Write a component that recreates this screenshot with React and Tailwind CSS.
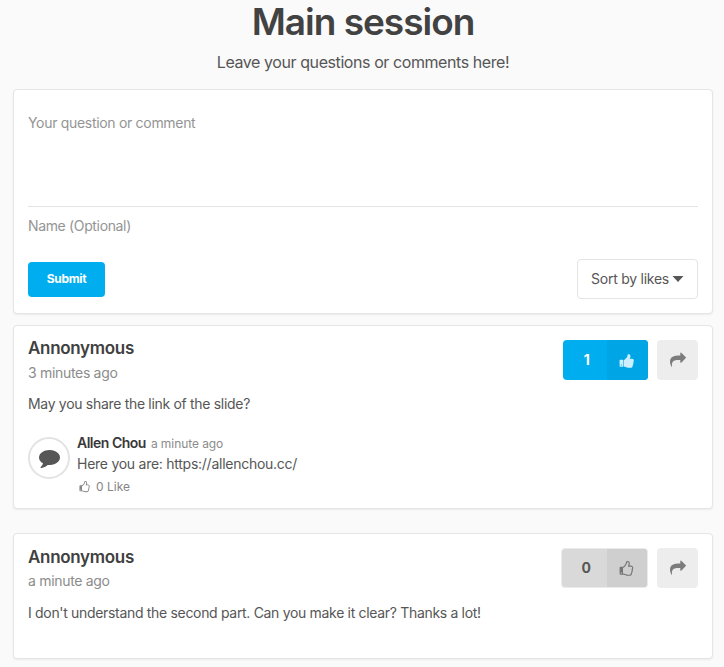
const THUMB_SOLID =
  'M320 1344q0-26-19-45t-45-19q-27 0-45.500 19t-18.500 45q0 27 18.500 45.500t45.500 18.500q26 0 45-18.500t19-45.500zm160-512v640q0 26-19 45t-45 19h-288q-26 0-45-19t-19-45v-640q0-26 19-45t45-19h288q26 0 45 19t19 45zm1184 0q0 86-55 149 15 44 15 76 3 76-43 137 17 56 0 117-15 57-54 94 9 112-49 181-64 76-197 78h-129q-66 0-144-15.500t-121.500-29-120.500-39.500q-123-43-158-44-26-1-45-19.500t-19-44.500v-641q0-25 18-43.500t43-20.500q24-2 76-59t101-121q68-87 101-120 18-18 31-48t17.500-48.500 13.500-60.500q7-39 12.500-61t19.500-52 34-50q19-19 45-19 46 0 82.500 10.500t60 26 40 40.500 24 45 12 50 5 45 .5 39q0 38-9.500 76t-19 60-27.500 56q-3 6-10 18t-11 22-8 24h277q78 0 135 57t57 135z';
const THUMB_OUTLINE =
  'M320 1344q0-26-19-45t-45-19q-27 0-45.500 19t-18.500 45q0 27 18.500 45.500t45.500 18.500q26 0 45-18.500t19-45.500zm1152-576q0-51-39-89.500t-89-38.500h-352q0-58 48-159.500t48-160.500q0-98-32-145t-128-47q-26 26-38 85t-30.500 125.500-59.500 109.500q-22 23-77 91-4 5-23 30t-31.500 41-34.500 42.500-40 44-38.500 35.500-40 27-35.500 9h-32v640h32q13 0 31.500 3t33 6.500 38 11 35 11.500 35.500 12.500 29 10.500q211 73 342 73h121q192 0 192-167 0-26-5-56 30-16 47.500-52.500t17.500-73.500-18-69q53-50 53-119 0-25-10-55.500t-25-47.500q32-1 53.500-47t21.500-81zm128-1q0 89-49 163 9 33 9 69 0 77-38 144 3 21 3 43 0 101-60 178 1 139-85 219.500t-227 80.500h-129q-96 0-189.500-22.500t-216.500-65.500q-116-40-138-40h-288q-53 0-90.500-37.500t-37.500-90.500v-640q0-53 37.500-90.500t90.500-37.500h274q36-24 137-155 58-75 107-128 24-25 35.500-85.500t30.500-126.500 62-108q39-37 90-37 84 0 151 32.500t102 101.500 35 186q0 93-48 192h176q104 0 180 76t76 179z';
const SHARE =
  'M1792 640q0 26-19 45l-512 512q-19 19-45 19t-45-19-19-45v-256h-224q-98 0-175.500 6t-154 21.500-133 42.500-105.500 69.500-80 101-48.500 138.500-17.500 181q0 55 5 123 0 6 2.500 23.500t2.500 26.500q0 15-8.500 25t-23.500 10q-16 0-28-17-7-9-13-22t-13.500-30-10.500-24q-127-285-127-451 0-199 53-333 162-403 875-403h224v-256q0-26 19-45t45-19 45 19l512 512q19 19 19 45z';
const COMMENT =
  'M1792 896q0 174-120 321.500t-326 233-450 85.500q-70 0-145-8-198 175-460 242-49 14-114 22-17 2-30.500-9t-17.500-29v-1q-3-4-.5-12t2-10 4.500-9.500l6-9 7-8.500 8-9q7-8 31-34.500t34.500-38 31-39.500 32.500-51 27-59 26-76q-157-89-247.500-220t-90.500-281q0-130 71-248.500t191-204.500 286-136.500 348-50.500q244 0 450 85.500t326 233 120 321.500z';

function Icon({ d, className }) {
  return (
    <svg viewBox="0 0 1792 1792" fill="currentColor" className={`shrink-0 ${className}`} aria-hidden="true">
      <path d={d} />
    </svg>
  );
}

function Card({ className, children }) {
  return (
    <section className={`w-[700px] rounded border border-[#e5e5e6] bg-white px-3.5 shadow-[0_1px_2px_rgba(34,36,38,0.07)] ${className}`}>
      {children}
    </section>
  );
}

function ShareButton() {
  return (
    <button className="ml-[9px] flex h-10 w-[41px] items-center justify-center rounded bg-[#ededed] text-[#7c7c7c]">
      <Icon d={SHARE} className="size-4" />
    </button>
  );
}

export default function App() {
  return (
    <main className="h-[667px] w-[724px] overflow-hidden bg-[#fafafa] pl-[13px] font-['Inter','Liberation_Sans',sans-serif] text-sm tracking-[-0.31px] text-[#565656]">
      <header className="w-[700px] text-center whitespace-nowrap">
        <h1 className="h-11 text-[37px] leading-[44px] font-semibold tracking-[-1px] text-[#424242]">Main session</h1>
        <p className="mt-2 h-[37px] text-base leading-5 tracking-[-0.42px]">Leave your questions or comments here!</p>
      </header>

      <Card className="h-[225px]">
        <div className="h-[117px] border-b border-[#e4e4e4] pt-[23px] leading-5 text-[#949494]">Your question or comment</div>
        <div className="pt-[9px] leading-5 tracking-[-0.35px] text-[#949494]">Name (Optional)</div>
        <div className="mt-[23px] flex h-10 items-center justify-between">
          <button className="h-[35px] w-[77px] rounded bg-[#00aeef] text-xs font-bold text-white">Submit</button>
          <button className="flex h-10 w-[121px] items-center justify-center rounded border border-[#e4e4e5] tracking-[-0.25px]">
            Sort by likes
            <svg viewBox="0 0 12 6" className="ml-[3px] h-1.5 w-3" fill="currentColor"><path d="M.5 0h11L6 6z" /></svg>
          </button>
        </div>
      </Card>

      <Card className="mt-[11px] h-[184px]">
        <div className="flex justify-between">
          <div className="pt-2.5">
            <h2 className="text-[17px] leading-6 font-semibold text-[#404040]">Annonymous</h2>
            <p className="mt-[3px] leading-5 text-[#8c8c8c]">3 minutes ago</p>
          </div>
          <div className="flex pt-3.5">
            <button className="flex h-10 w-[85px] overflow-hidden rounded bg-[#00aeef] font-bold text-white">
              <span className="flex h-10 w-11 items-center justify-center pl-[3px]">1</span>
              <span className="flex h-10 w-[41px] items-center justify-center bg-[#00a5e5] pt-px pr-px text-[#ccefff]"><Icon d={THUMB_SOLID} className="size-4" /></span>
            </button>
            <ShareButton />
          </div>
        </div>
        <p className="mt-[11px] leading-5">May you share the link of the slide?</p>
        <div className="mt-[18px] flex">
          <div className="mt-[5px] flex size-[42px] items-center justify-center rounded-full border-2 border-[#e3e3e3] pb-px">
            <Icon d={COMMENT} className="size-[21px]" />
          </div>
          <div className="ml-[7px] pt-px">
            <div className="flex items-baseline leading-5">
              <span className="font-semibold tracking-[-0.5px] text-[#383838]">Allen Chou</span>
              <span className="ml-[5px] text-xs tracking-[-0.07px] text-[#8c8c8c]">a minute ago</span>
            </div>
            <p className="mt-px leading-5 tracking-[-0.26px]">Here you are: https://allenchou.cc/</p>
            <div className="mt-[3px] flex items-center text-xs leading-5 tracking-normal text-[#858585]">
              <Icon d={THUMB_OUTLINE} className="ml-0.5 mr-[5px] size-3" />
              0 Like
            </div>
          </div>
        </div>
      </Card>

      <Card className="mt-6 h-[126px]">
        <div className="flex justify-between">
          <div className="pt-[11px]">
            <h2 className="text-[17px] leading-6 font-semibold text-[#404040]">Annonymous</h2>
            <p className="mt-[2px] leading-5 text-[#8c8c8c]">a minute ago</p>
          </div>
          <div className="flex pt-3.5">
            <button className="flex h-10 w-[87px] overflow-hidden rounded border border-[#ebebeb] bg-[#d9d9d9] font-bold">
              <span className="flex h-[38px] w-[45px] items-center justify-center pl-[3px]">0</span>
              <span className="flex h-[38px] w-10 items-center justify-center bg-[#cfcfcf] pt-px text-[#777]"><Icon d={THUMB_OUTLINE} className="size-4" /></span>
            </button>
            <ShareButton />
          </div>
        </div>
        <p className="mt-3 leading-5 tracking-[-0.32px]">I don't understand the second part. Can you make it clear? Thanks a lot!</p>
      </Card>
    </main>
  );
}
